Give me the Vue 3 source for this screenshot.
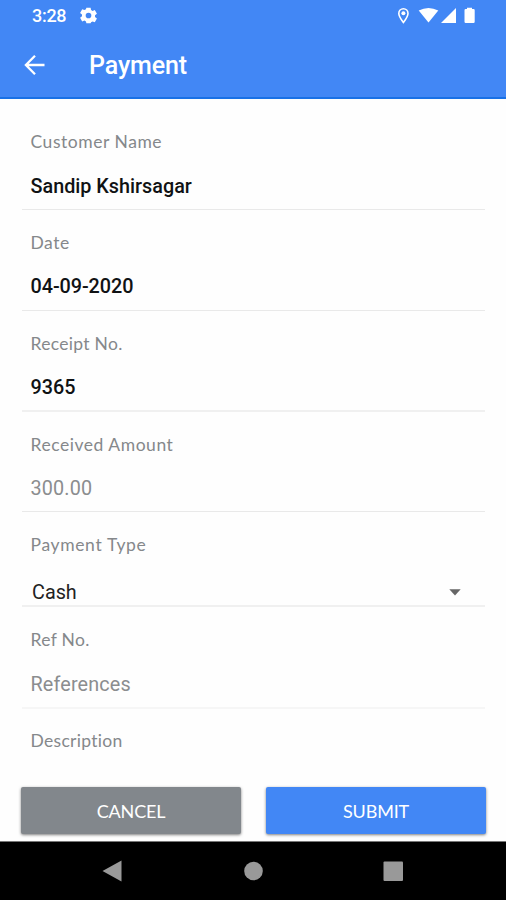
<script setup>
const fields = [
  { label: 'Customer Name', value: 'Sandip Kshirsagar', kind: 'filled', size: 'h-first', id: 'name' },
  { label: 'Date', value: '04-09-2020', kind: 'filled', size: 'h-tall', id: 'date' },
  { label: 'Receipt No.', value: '9365', kind: 'filled', size: 'h-short', id: 'receipt' },
  { label: 'Received Amount', value: '300.00', kind: 'hint', size: 'h-amount', id: 'amount' },
  { label: 'Payment Type', value: 'Cash', kind: 'select', size: 'h-select', id: 'type' },
  { label: 'Ref No.', value: 'References', kind: 'hint', size: 'h-ref', id: 'ref' },
  { label: 'Description', value: '', kind: 'none', size: 'h-last', id: 'description' }
]
</script>

<template>
  <div class="screen">
    <header class="top">
      <div class="status">
        <span class="time">3:28</span>
        <svg class="gear" width="18" height="18" viewBox="0 0 24 24"><path fill="#fff" fill-rule="evenodd" d="M9 1h6l.6 3.4 2.1 1.2 3.2-1.2 3 5.2-2.7 2.2v2.4l2.7 2.2-3 5.2-3.2-1.2-2.1 1.2L15 23H9l-.6-2.6-2.1-1.2-3.2 1.2-3-5.2 2.7-2.2v-2.4L.1 8.400l3-5.200 3.200 1.200 2.100-1.200zM12 8a4 4 0 1 0 0 8 4 4 0 0 0 0-8z" /></svg>
        <svg class="tray" width="80" height="18" viewBox="0 0 80 18">
          <path d="M6.400 15.500C3.800 12 1.800 9.300 1.800 6.400a4.600 4.600 0 0 1 9.200 0c0 2.900-2 5.600-4.600 9.100z" fill="none" stroke="#fff" stroke-width="1.600" />
          <circle cx="6.400" cy="6.300" r="2" fill="#fff" />
          <path d="M21.700 3.600Q31.500-1.800 41.300 3.600L31.500 15.600z" fill="#fff" />
          <path d="M44 16 59 1v15z" fill="#fff" />
          <path d="M70 2V.8h5V2h1.500a1.200 1.200 0 0 1 1.200 1.200v11.600a1.200 1.200 0 0 1-1.200 1.200h-7.800a1.200 1.200 0 0 1-1.200-1.200V3.200A1.200 1.200 0 0 1 68.700 2z" fill="#fff" />
        </svg>
      </div>
      <div class="bar">
        <svg class="back" width="22" height="22" viewBox="0 0 22 22"><path d="M20.500 11H2.500M11 1.800 1.900 11l9.100 9.200" fill="none" stroke="#fff" stroke-width="2.300" /></svg>
        <h1>Payment</h1>
      </div>
    </header>

    <main>
      <section v-for="f in fields" :key="f.id" class="field" :class="[f.size, f.kind]">
        <div class="label"><span :class="'l-' + f.id">{{ f.label }}</span></div>
        <div v-if="f.value" class="value">
          <span :class="'v-' + f.id">{{ f.value }}</span>
          <svg v-if="f.kind === 'select'" width="12" height="7" viewBox="0 0 12 7"><path d="M.3.300h11.400L6 6.500z" fill="#666" /></svg>
        </div>
      </section>
    </main>

    <div class="actions">
      <button class="cancel">CANCEL</button>
      <button class="submit">SUBMIT</button>
    </div>

    <nav>
      <svg width="506" height="58" viewBox="0 0 506 58">
        <path d="M102.500 29 121.500 18.500v21z" fill="#999" />
        <circle cx="253.500" cy="29" r="9.300" fill="#999" />
        <rect x="383.500" y="19.500" width="19.500" height="19.500" rx="1" fill="#999" />
      </svg>
    </nav>
  </div>
</template>

<style>
body { margin: 0; background: #fefefe; }
</style>

<style scoped>
.screen { width: 506px; height: 900px; display: flex; flex-direction: column; overflow: hidden; background: #fefefe; font-family: Roboto, sans-serif; }
.top { box-sizing: border-box; height: 99px; flex: none; background: #4287f5; border-bottom: 2px solid #1971e6; color: #fff; }
.status { height: 32px; display: flex; align-items: center; padding: 0 29px 0 32px; }
.time { font-size: 18px; font-weight: 500; line-height: 32px; letter-spacing: -.3px; width: 48px; }
.gear { width: 17px; height: 17px; margin-bottom: 1px; }
.tray { margin-left: auto; }
.bar { display: flex; align-items: center; height: 66px; padding-left: 24px; gap: 43px; }
.back { margin-bottom: 1px; }
h1 { margin: 2px 0 0; font-size: 25px; font-weight: 500; line-height: 66px; letter-spacing: -.1px; }
main { height: 678px; flex: none; padding: 11px 21px 0 22px; box-sizing: border-box; overflow: hidden; }
.field { box-sizing: border-box; border-bottom: 2px solid #f0f0f0; padding: 22px 9px 0 8.500px; }
.h-first { height: 100px; border-bottom-width: 1px; border-color: #e9e9e9; }
.h-tall { height: 101px; border-bottom-width: 1px; border-color: #e9e9e9; }
.h-short { height: 101px; }
.h-amount { height: 100px; border-bottom-width: 1px; border-color: #e9e9e9; }
.h-select { height: 95px; }
.h-ref { height: 102px; border-color: #f6f6f6; }
.h-last { border: 0; }
.label { height: 20px; line-height: 21px; font-family: Lato, sans-serif; font-size: 17.500px; color: #85888b; letter-spacing: .54px; white-space: nowrap; }
.h-first .label, .h-last .label { line-height: 19px; }
.l-type { letter-spacing: .65px; }
.l-receipt, .l-ref, .l-description { letter-spacing: .3px; }
.value { height: 24px; line-height: 24px; margin-top: 23px; font-size: 19.800px; font-weight: 500; letter-spacing: 0; color: #101214; display: flex; align-items: center; white-space: nowrap; }
.v-date { letter-spacing: -.05px; }
.hint .value { color: #8b8d8f; font-weight: 400; letter-spacing: .15px; }
.select .value { font-weight: 400; margin-top: 27px; padding: 0 15px 0 1.500px; justify-content: space-between; color: #222; }
.select .value svg { margin-bottom: 2px; }
.h-ref .value { margin-top: 24px; }
.actions { height: 64px; flex: none; display: flex; gap: 25px; padding: 10px 20px 0 21px; box-sizing: border-box; }
button { flex: 1; height: 47px; padding: 0; border: 0; border-radius: 2px; font: 400 18px/49px Lato, sans-serif; letter-spacing: -.15px; color: #fff; box-shadow: 0 1px 3px rgba(0, 0, 0, .5); }
.cancel { background: #82878c; }
.submit { background: #4287f5; }
nav { height: 59px; flex: none; background: #000; border-top: 1px solid #777; box-sizing: border-box; }
nav svg { display: block; }
</style>
